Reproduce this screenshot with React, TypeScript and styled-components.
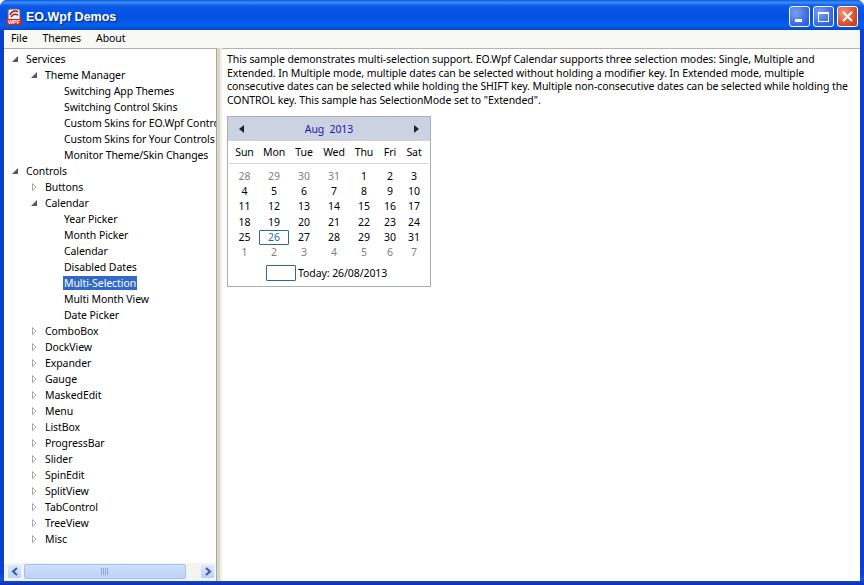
import React from 'react';
import styled, { createGlobalStyle } from 'styled-components';

const Global = createGlobalStyle`
  html, body { margin: 0; padding: 0; width: 864px; height: 585px; overflow: hidden; }
  body { font-family: "Noto Sans", "Liberation Sans", Arial, sans-serif; font-size: 10.5px; letter-spacing: -0.08px; color: #000; }
`;

const Win = styled.div`
  width: 864px;
  height: 585px;
  display: flex;
  flex-direction: column;
  box-sizing: border-box;
  background: linear-gradient(180deg, #0a3fd0 98%, #1a50d8 99%, #0832a8 100%);
  border-radius: 7px 7px 0 0;
  overflow: hidden;
`;

const TitleBar = styled.div`
  height: 30px;
  flex: none;
  box-sizing: border-box;
  display: flex;
  align-items: center;
  padding: 2px 6px 0 6px;
  gap: 3px;
  background: linear-gradient(180deg, #0a5be0 0%, #3c8cf6 8%, #0a5ae6 20%, #0350e2 55%, #0560ee 85%, #0348c8 100%);
`;

const TitleText = styled.div`
  flex: 1;
  margin-left: 1px;
  padding-top: 2px;
  color: #fff;
  font-family: "Liberation Sans", Arial, sans-serif;
  font-weight: bold;
  font-size: 12.5px;
  letter-spacing: 0;
  text-shadow: 1px 1px 1px #0a2a80;
`;

const CtlButton = styled.div<{ $close?: boolean }>`
  width: 21px;
  height: 21px;
  box-sizing: border-box;
  border: 1px solid #fff;
  border-radius: 3px;
  background: ${p => p.$close
    ? 'radial-gradient(circle at 30% 30%, #ef9a7c, #d8512c 60%, #b8371a)'
    : 'radial-gradient(circle at 30% 30%, #7ba2ee, #3d6ee0 60%, #2a55c8)'};
  display: flex;
  align-items: center;
  justify-content: center;
`;

const Body = styled.div`
  flex: 1;
  min-height: 0;
  margin: 0 4px 4px 4px;
  display: flex;
  flex-direction: column;
  background: #ece9d8;
`;

const MenuBar = styled.div`
  height: 18px;
  flex: none;
  box-sizing: border-box;
  display: flex;
  background: #f8f8f4;
  padding: 0 0 2px 7px;
  gap: 15px;
  align-items: center;
`;

const MenuItem = styled.span`
  font-size: 10.5px;
`;

const Panes = styled.div`
  flex: 1;
  min-height: 0;
  display: flex;
`;

const TreePane = styled.div`
  width: 212px;
  flex: none;
  display: flex;
  flex-direction: column;
  background: #fff;
  border-top: 1px solid #b4b4ac;
  overflow: hidden;
`;

const TreeBody = styled.div`
  flex: 1;
  min-height: 0;
  padding-top: 2px;
  overflow: hidden;
`;

const Row = styled.div<{ $level: number }>`
  height: 16px;
  display: flex;
  align-items: center;
  white-space: nowrap;
  padding-left: ${p => 7 + p.$level * 19}px;
`;

const Arrow = styled.span`
  width: 15px;
  flex: none;
  display: flex;
  align-items: center;
`;

const Label = styled.span<{ $selected?: boolean }>`
  padding: 0 1px;
  margin-left: -1px;
  line-height: 14px;
  ${p => p.$selected ? 'background: #3169c6; color: #fff;' : ''}
`;

const HScroll = styled.div`
  height: 17px;
  flex: none;
  display: flex;
  align-items: center;
  gap: 2px;
  padding: 0 1px 1px 3px;
  background: #f4f4ee;
`;

const ScrollBtn = styled.div`
  width: 15px;
  height: 15px;
  border-radius: 2px;
  background: linear-gradient(180deg, #dfe9fd, #bcd0f8);
  border: 1px solid #eef3ff;
  box-sizing: border-box;
  display: flex;
  align-items: center;
  justify-content: center;
`;

const Track = styled.div`
  flex: 1;
  display: flex;
  padding-right: 12px;
`;

const Thumb = styled.div`
  flex: 1;
  height: 15px;
  box-sizing: border-box;
  border-radius: 2px;
  border: 1px solid #a8c0ee;
  background: linear-gradient(180deg, #cfdffb, #bcd2f8);
  display: flex;
  align-items: center;
  justify-content: center;
`;

const Splitter = styled.div`
  width: 6px;
  flex: none;
  background: linear-gradient(90deg, #a8a89c 0 1px, #d8d6c8 1px 4px, #f0efe6 4px);
`;

const Content = styled.div`
  flex: 1;
  min-width: 0;
  background: #fff;
  border-top: 1px solid #b4b4ac;
  padding: 4px 4px 0 5px;
`;

const Intro = styled.p`
  margin: 0 0 9px;
  line-height: 13.5px;
  white-space: nowrap;
`;

const Calendar = styled.div`
  width: 204px;
  height: 171px;
  box-sizing: border-box;
  border: 1px solid #a9adb8;
  display: flex;
  flex-direction: column;
`;

const CalHead = styled.div`
  height: 24px;
  flex: none;
  background: #cdd2e3;
  display: flex;
  align-items: center;
  justify-content: space-between;
  padding: 0 11px;
  color: #1a1aa8;
`;

const columns = '29px 30px 30px 30px 30px 22px 26px';

const WeekRow = styled.div`
  display: grid;
  grid-template-columns: ${columns};
  padding: 3px 2px 3px 1px;
  margin: 0 1px;
  height: 16px;
  align-items: center;
  text-align: center;
  border-bottom: 1px solid #d8d8d8;
`;

const Dates = styled.div`
  display: grid;
  grid-template-columns: ${columns};
  grid-auto-rows: 15.2px;
  padding: 5px 2px 0 2px;
  text-align: center;
`;

const DateCell = styled.div<{ $muted?: boolean; $today?: boolean }>`
  line-height: ${p => p.$today ? '13px' : '15px'};
  color: ${p => p.$today ? '#2b6a96' : p.$muted ? '#808080' : '#000'};
  ${p => p.$today ? 'border: 1px solid #2b6a96; border-radius: 1px; height: 13px;' : ''}
`;

const TodayRow = styled.div`
  display: flex;
  align-items: center;
  gap: 2px;
  margin-top: 5px;
  padding-left: 38px;
`;

const TodayBox = styled.div`
  width: 28px;
  height: 14px;
  border: 1px solid #2b6a96;
  border-radius: 1px;
`;

const Closed = () => (
  <svg width="8" height="10" viewBox="0 0 8 10"><path d="M2.5 1.5 L6 5 L2.5 8.5 Z" fill="#fff" stroke="#a6a6a6" /></svg>
);
const Open = () => (
  <svg width="8" height="8" viewBox="0 0 8 8"><path d="M7 1 V7 H1 Z" fill="#595959" /></svg>
);

type Node = { t: string; l: number; a?: 'o' | 'c'; s?: boolean };

const tree: Node[] = [
  { t: 'Services', l: 0, a: 'o' },
  { t: 'Theme Manager', l: 1, a: 'o' },
  { t: 'Switching App Themes', l: 2 },
  { t: 'Switching Control Skins', l: 2 },
  { t: 'Custom Skins for EO.Wpf Controls', l: 2 },
  { t: 'Custom Skins for Your Controls', l: 2 },
  { t: 'Monitor Theme/Skin Changes', l: 2 },
  { t: 'Controls', l: 0, a: 'o' },
  { t: 'Buttons', l: 1, a: 'c' },
  { t: 'Calendar', l: 1, a: 'o' },
  { t: 'Year Picker', l: 2 },
  { t: 'Month Picker', l: 2 },
  { t: 'Calendar', l: 2 },
  { t: 'Disabled Dates', l: 2 },
  { t: 'Multi-Selection', l: 2, s: true },
  { t: 'Multi Month View', l: 2 },
  { t: 'Date Picker', l: 2 },
  ...['ComboBox', 'DockView', 'Expander', 'Gauge', 'MaskedEdit', 'Menu', 'ListBox', 'ProgressBar', 'Slider', 'SpinEdit', 'SplitView', 'TabControl', 'TreeView', 'Misc']
    .map(t => ({ t, l: 1, a: 'c' as const })),
];

const weekdays = ['Sun', 'Mon', 'Tue', 'Wed', 'Thu', 'Fri', 'Sat'];
const dates = [
  28, 29, 30, 31, 1, 2, 3, 4, 5, 6, 7, 8, 9, 10, 11, 12, 13, 14, 15, 16, 17,
  18, 19, 20, 21, 22, 23, 24, 25, 26, 27, 28, 29, 30, 31, 1, 2, 3, 4, 5, 6, 7,
];

const intro = [
  'This sample demonstrates multi-selection support. EO.Wpf Calendar supports three selection modes: Single, Multiple and',
  'Extended. In Multiple mode, multiple dates can be selected without holding a modifier key. In Extended mode, multiple',
  'consecutive dates can be selected while holding the SHIFT key. Multiple non-consecutive dates can be selected while holding the',
  'CONTROL key. This sample has SelectionMode set to "Extended".',
];

export default function App() {
  return (
    <Win>
      <Global />
      <TitleBar>
        <svg width="16" height="17" viewBox="0 0 16 17">
          <rect x="2" y="1" width="12" height="14" rx="2" fill="#f4f0ee" stroke="#666" />
          <path d="M4 7 C5 3 10 2 12 4 M5 9 C7 6 10 6 12 7" fill="none" stroke="#a02020" strokeWidth="1.5" />
          <rect x="0" y="11" width="16" height="6" fill="#d02020" />
          <text x="8" y="16" textAnchor="middle" fontSize="5.5" fontWeight="bold" fontFamily="Liberation Sans" fill="#fff">WPF</text>
        </svg>
        <TitleText>EO.Wpf Demos</TitleText>
        <CtlButton>
          <svg width="13" height="13" viewBox="0 0 13 13"><rect x="2" y="9" width="7" height="3" fill="#fff" /></svg>
        </CtlButton>
        <CtlButton>
          <svg width="13" height="13" viewBox="0 0 13 13"><rect x="1.5" y="2.5" width="10" height="9" fill="none" stroke="#fff" /><rect x="1" y="2" width="11" height="2" fill="#fff" /></svg>
        </CtlButton>
        <CtlButton $close>
          <svg width="13" height="13" viewBox="0 0 13 13"><path d="M2 2 L11 11 M11 2 L2 11" stroke="#fff" strokeWidth="2" /></svg>
        </CtlButton>
      </TitleBar>
      <Body>
        <MenuBar>
          <MenuItem>File</MenuItem>
          <MenuItem>Themes</MenuItem>
          <MenuItem>About</MenuItem>
        </MenuBar>
        <Panes>
          <TreePane>
            <TreeBody>
              {tree.map((n, i) => (
                <Row key={i} $level={n.l}>
                  <Arrow>{n.a === 'o' ? <Open /> : n.a === 'c' ? <Closed /> : null}</Arrow>
                  <Label $selected={n.s}>{n.t}</Label>
                </Row>
              ))}
            </TreeBody>
            <HScroll>
              <ScrollBtn>
                <svg width="8" height="9" viewBox="0 0 8 9"><path d="M6 1 L2 4.5 L6 8" fill="none" stroke="#3a5a9a" strokeWidth="2" /></svg>
              </ScrollBtn>
              <Track>
                <Thumb>
                  <svg width="8" height="7" viewBox="0 0 8 7"><path d="M0.5 0 V7 M2.5 0 V7 M4.5 0 V7 M6.5 0 V7" stroke="#8ea8de" /></svg>
                </Thumb>
              </Track>
              <ScrollBtn>
                <svg width="8" height="9" viewBox="0 0 8 9"><path d="M2 1 L6 4.5 L2 8" fill="none" stroke="#3a5a9a" strokeWidth="2" /></svg>
              </ScrollBtn>
            </HScroll>
          </TreePane>
          <Splitter />
          <Content>
            <Intro>{intro.map(l => <div key={l}>{l}</div>)}</Intro>
            <Calendar>
              <CalHead>
                <svg width="6" height="8" viewBox="0 0 6 8"><path d="M5 0 L0 4 L5 8 Z" fill="#222" /></svg>
                <span>Aug&nbsp; 2013</span>
                <svg width="6" height="8" viewBox="0 0 6 8"><path d="M1 0 L6 4 L1 8 Z" fill="#222" /></svg>
              </CalHead>
              <WeekRow>{weekdays.map(d => <span key={d}>{d}</span>)}</WeekRow>
              <Dates>
                {dates.map((d, i) => (
                  <DateCell key={i} $muted={i < 4 || i > 34} $today={i === 29}>{d}</DateCell>
                ))}
              </Dates>
              <TodayRow>
                <TodayBox />
                <span>Today: 26/08/2013</span>
              </TodayRow>
            </Calendar>
          </Content>
        </Panes>
      </Body>
    </Win>
  );
}
